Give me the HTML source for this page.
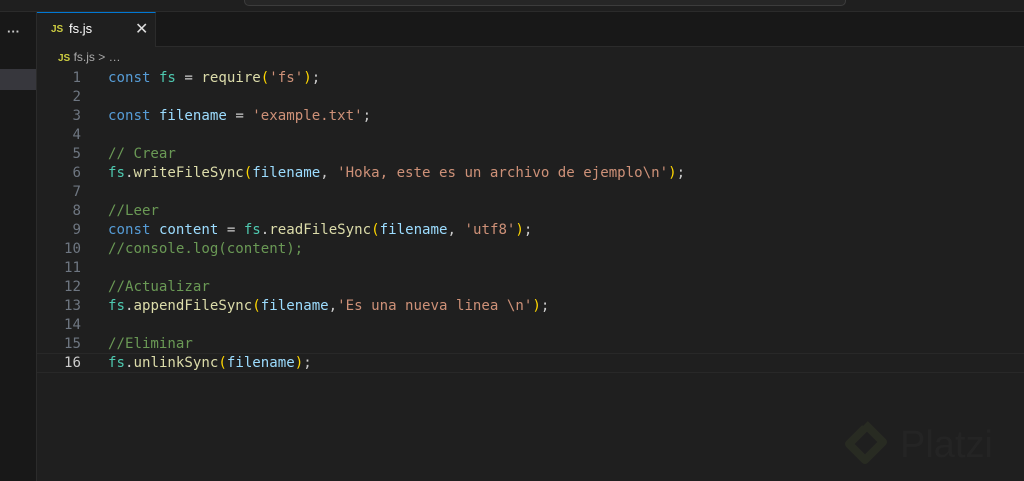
<!DOCTYPE html><html><head><style>
body{margin:0;width:1024px;height:481px;background:#1f1f1f;overflow:hidden;position:relative;font-family:"Liberation Sans",sans-serif}
.title{position:absolute;left:0;top:0;width:1024px;height:11px;background:#1f1f1f;border-bottom:1px solid #2b2b2b}
.search{position:absolute;left:244px;top:-10px;width:600px;height:14px;border:1px solid #3c3c3c;border-radius:5px;background:#262626}
.side{position:absolute;left:0;top:12px;width:36px;height:469px;background:#181818;border-right:1px solid #2b2b2b}
.sel{position:absolute;left:0;width:36px;height:21px;background:#37373d}
.tabs{position:absolute;left:37px;top:12px;width:987px;height:34px;background:#181818;border-bottom:1px solid #2b2b2b}
.tab{position:absolute;left:37px;top:12px;width:119px;height:35px;background:#1f1f1f;border-top:1px solid #0078d4;border-right:1px solid #2b2b2b;box-sizing:border-box}
.js{color:#cbcb41;font-weight:bold;font-size:10px}
.code{position:absolute;left:0;top:69px;font-family:"DejaVu Sans Mono",monospace;font-size:14.1px;line-height:19px;white-space:pre;color:#cccccc}
.ln{position:absolute;left:40px;width:41px;text-align:right;color:#6e7681}
.c{position:absolute;left:108px}
.k{color:#569cd6}.v{color:#9cdcfe}.t{color:#4ec9b0}.f{color:#dcdcaa}.s{color:#ce9178}.m{color:#6a9955}.p{color:#ffd700}
</style></head><body>
<div class="title"></div><div class="search"></div>
<div class="side"><div style="position:absolute;left:7px;top:12px;color:#ccc;font-size:13px;font-weight:bold">···</div><div class="sel" style="top:57px"></div></div>
<div class="tabs"></div>
<div class="tab"><span class="js" style="position:absolute;left:14px;top:11px">JS</span><span style="position:absolute;left:32px;top:8px;color:#fff;font-size:13px">fs.js</span><span style="position:absolute;left:98px;top:6px;color:#ddd;font-size:16px">✕</span></div>
<div style="position:absolute;left:58px;top:50px;font-size:12px;color:#a9a9a9"><span class="js">JS</span> fs.js &gt; …</div>
<div style="position:absolute;left:37px;top:353px;width:987px;height:18px;border-top:1px solid #282828;border-bottom:1px solid #282828"></div>
<div class="code">
<div class="ln" style="top:0">1</div><div class="c" style="top:0"><span class="k">const</span> <span class="t">fs</span> = <span class="f">require</span><span class="p">(</span><span class="s">'fs'</span><span class="p">)</span>;</div>
<div class="ln" style="top:19px">2</div>
<div class="ln" style="top:38px">3</div><div class="c" style="top:38px"><span class="k">const</span> <span class="v">filename</span> = <span class="s">'example.txt'</span>;</div>
<div class="ln" style="top:57px">4</div>
<div class="ln" style="top:76px">5</div><div class="c m" style="top:76px">// Crear</div>
<div class="ln" style="top:95px">6</div><div class="c" style="top:95px"><span class="t">fs</span>.<span class="f">writeFileSync</span><span class="p">(</span><span class="v">filename</span>, <span class="s">'Hoka, este es un archivo de ejemplo\n'</span><span class="p">)</span>;</div>
<div class="ln" style="top:114px">7</div>
<div class="ln" style="top:133px">8</div><div class="c m" style="top:133px">//Leer</div>
<div class="ln" style="top:152px">9</div><div class="c" style="top:152px"><span class="k">const</span> <span class="v">content</span> = <span class="t">fs</span>.<span class="f">readFileSync</span><span class="p">(</span><span class="v">filename</span>, <span class="s">'utf8'</span><span class="p">)</span>;</div>
<div class="ln" style="top:171px">10</div><div class="c m" style="top:171px">//console.log(content);</div>
<div class="ln" style="top:190px">11</div>
<div class="ln" style="top:209px">12</div><div class="c m" style="top:209px">//Actualizar</div>
<div class="ln" style="top:228px">13</div><div class="c" style="top:228px"><span class="t">fs</span>.<span class="f">appendFileSync</span><span class="p">(</span><span class="v">filename</span>,<span class="s">'Es una nueva linea \n'</span><span class="p">)</span>;</div>
<div class="ln" style="top:247px">14</div>
<div class="ln" style="top:266px">15</div><div class="c m" style="top:266px">//Eliminar</div>
<div class="ln" style="top:285px;color:#ccc">16</div><div class="c" style="top:285px"><span class="t">fs</span>.<span class="f">unlinkSync</span><span class="p">(</span><span class="v">filename</span><span class="p">)</span>;</div>
</div>
<svg style="position:absolute;left:843px;top:420px" width="50" height="50"><path d="M22 4 L40 22 L22 40 L6 24 L22 8" fill="none" stroke="#282b22" stroke-width="8" stroke-linejoin="round"/></svg>
<div style="position:absolute;left:900px;top:424px;font-size:38px;color:#242424">Platzi</div>
</body></html>
